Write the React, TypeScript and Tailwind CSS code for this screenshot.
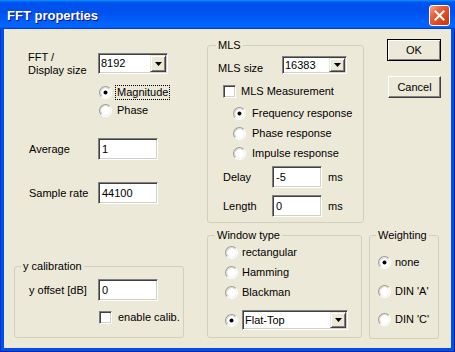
import React from "react";

const SUNKEN =
  "bg-white border border-t-[#808080] border-l-[#808080] border-b-white border-r-white shadow-[inset_1px_1px_0_#404040,inset_-1px_-1px_0_#d4d0c8]";

function Edit({ className, value }: { className: string; value: string }) {
  return (
    <div className={`${SUNKEN} ${className} flex items-center pl-[3px]`}>
      <span>{value}</span>
    </div>
  );
}

function Combo({ className, value }: { className: string; value: string }) {
  return (
    <div className={`${SUNKEN} ${className} flex items-stretch`}>
      <div className="flex-1 flex items-center pl-[2px]">{value}</div>
      <div className="my-[1px] mr-[1px] w-[16px] flex items-center justify-center bg-[#ECE9D8] border border-t-[#ECE9D8] border-l-[#ECE9D8] border-b-[#404040] border-r-[#404040] shadow-[inset_1px_1px_0_#ffffff,inset_-1px_-1px_0_#808080]">
        <svg width="7" height="4" viewBox="0 0 7 4">
          <path d="M0 0h7L3.5 4z" fill="#000" />
        </svg>
      </div>
    </div>
  );
}

function Radio({ checked = false }: { checked?: boolean }) {
  return (
    <svg width="13" height="13" viewBox="0 0 12 12" className="shrink-0">
      <circle cx="6" cy="6" r="4.6" fill="#fff" />
      <path d="M2.11 9.89A5.5 5.5 0 0 1 9.89 2.11" fill="none" stroke="#a0a0a0" strokeWidth="1" />
      <path d="M9.89 2.11A5.5 5.5 0 0 1 2.11 9.89" fill="none" stroke="#ffffff" strokeWidth="1" />
      <path d="M2.82 9.18A4.5 4.5 0 0 1 9.18 2.82" fill="none" stroke="#d4d4d0" strokeWidth="1" />
      <path d="M9.18 2.82A4.5 4.5 0 0 1 2.82 9.18" fill="none" stroke="#f4f4f0" strokeWidth="1" />
      {checked && <circle cx="6" cy="6" r="1.8" fill="#000" />}
    </svg>
  );
}

function Checkbox() {
  return <div className={`${SUNKEN} w-[13px] h-[13px] shrink-0`} />;
}

const GROUP = "border border-[#D0D0BF] rounded-[3px] p-0 m-0 min-w-0";

export default function App() {
  return (
    <div className="w-[455px] h-[352px] flex flex-col bg-[#0052E6] shadow-[inset_1px_0_0_#0831d9,inset_-1px_-1px_0_#001ea0] font-['Liberation_Sans',Arial,sans-serif] text-[11px] leading-[13px] text-black">
      {/* Title bar */}
      <div className="h-[29px] shrink-0 flex items-start justify-between bg-[linear-gradient(180deg,#0997ff,#0053ee_8%,#0050ee_40%,#06f_88%,#06f_93%,#005bff_95%,#003dd7_96%,#003dd7)]">
        <div className="pl-[7px] pt-[8px] text-[13px] leading-[15px] font-bold text-white [text-shadow:1px_1px_0_#0f1089]">
          FFT properties
        </div>
        <div className="mt-[5px] mr-[5px] w-[21px] h-[21px] rounded-[3px] border border-white flex items-center justify-center bg-[linear-gradient(135deg,#f6ad92_0%,#e8673f_30%,#d9441c_70%,#c8380f_100%)]">
          <svg width="11" height="11" viewBox="0 0 11 11">
            <path d="M1.5 1.5L9.5 9.5M9.5 1.5L1.5 9.5" stroke="#fff" strokeWidth="2" strokeLinecap="square" />
          </svg>
        </div>
      </div>

      {/* Body */}
      <div className="flex-1 mx-[4px] mb-[4px] bg-[#ECE9D8] flex items-start">
        {/* Column A */}
        <div className="ml-[10px] w-[170px] flex flex-col">
          <div className="mt-[24px] h-[21px] flex items-start">
            <div className="w-[84px] pl-[14px] -mt-[2px] leading-[13px]">
              FFT /<br />
              Display size
            </div>
            <Combo className="w-[70px] h-[21px]" value="8192" />
          </div>
          <div className="mt-[9px] ml-[85px] flex flex-col">
            <div className="h-[18px] flex items-center">
              <Radio checked />
              <span className="ml-[3px] px-[1px] border border-dotted border-black leading-[13px]">Magnitude</span>
            </div>
            <div className="h-[18px] flex items-center">
              <Radio />
              <span className="ml-[5px]">Phase</span>
            </div>
          </div>
          <div className="mt-[19px] flex items-center">
            <div className="w-[84px] pl-[15px]">Average</div>
            <Edit className="w-[60px] h-[22px]" value="1" />
          </div>
          <div className="mt-[22px] flex items-center">
            <div className="w-[84px] pl-[15px]">Sample rate</div>
            <Edit className="w-[60px] h-[22px]" value="44100" />
          </div>
          <fieldset className={`${GROUP} mt-[55px] h-[79px]`}>
            <legend className="ml-[6px] px-[2px] leading-[14px]">y calibration</legend>
            <div className="mt-[6px] flex items-center">
              <div className="w-[83px] pl-[14px]">y offset [dB]</div>
              <Edit className="w-[60px] h-[22px]" value="0" />
            </div>
            <div className="mt-[10px] ml-[84px] flex items-center">
              <Checkbox />
              <span className="ml-[6px]">enable calib.</span>
            </div>
          </fieldset>
        </div>

        {/* Column B */}
        <div className="ml-[23px] w-[157px] flex flex-col">
          <fieldset className={`${GROUP} mt-[9px] h-[185px]`}>
            <legend className="ml-[8px] px-[2px] leading-[14px]">MLS</legend>
            <div className="mt-[4px] h-[18px] flex items-start">
              <div className="w-[74px] pl-[10px] pt-[6px]">MLS size</div>
              <Combo className="w-[65px] h-[18px]" value="16383" />
            </div>
            <div className="mt-[11px] ml-[15px] flex items-center">
              <Checkbox />
              <span className="ml-[5px]">MLS Measurement</span>
            </div>
            <div className="mt-[5px] ml-[25px] flex flex-col">
              <div className="h-[20px] flex items-center">
                <Radio checked />
                <span className="ml-[6px]">Frequency response</span>
              </div>
              <div className="h-[20px] flex items-center">
                <Radio />
                <span className="ml-[6px]">Phase response</span>
              </div>
              <div className="h-[20px] flex items-center">
                <Radio />
                <span className="ml-[6px]">Impulse response</span>
              </div>
            </div>
            <div className="mt-[3px] flex items-center">
              <div className="w-[64px] pl-[15px]">Delay</div>
              <Edit className="w-[50px] h-[22px]" value="-5" />
              <span className="ml-[6px]">ms</span>
            </div>
            <div className="mt-[7px] flex items-center">
              <div className="w-[64px] pl-[15px]">Length</div>
              <Edit className="w-[50px] h-[22px]" value="0" />
              <span className="ml-[6px]">ms</span>
            </div>
          </fieldset>
          <fieldset className={`${GROUP} mt-[5px] w-[155px] h-[110px]`}>
            <legend className="ml-[7px] px-[2px] leading-[14px]">Window type</legend>
            <div className="ml-[17px] flex flex-col">
              <div className="h-[20px] flex items-center">
                <Radio />
                <span className="ml-[4px]">rectangular</span>
              </div>
              <div className="h-[20px] flex items-center">
                <Radio />
                <span className="ml-[4px]">Hamming</span>
              </div>
              <div className="h-[20px] flex items-center">
                <Radio />
                <span className="ml-[4px]">Blackman</span>
              </div>
              <div className="mt-[8px] h-[20px] flex items-center">
                <Radio checked />
                <Combo className="ml-[4px] w-[106px] h-[20px]" value="Flat-Top" />
              </div>
            </div>
          </fieldset>
        </div>

        {/* Column C */}
        <div className="ml-[5px] w-[73px] flex flex-col">
          <div className="mt-[10px] ml-[18px] w-[54px] h-[22px] flex items-center justify-center border border-black shadow-[inset_1px_1px_0_#ffffff,inset_-1px_-1px_0_#808080]">
            OK
          </div>
          <div className="mt-[15px] ml-[19px] w-[53px] h-[22px] flex items-center justify-center border border-t-white border-l-white border-b-[#404040] border-r-[#404040] shadow-[inset_-1px_-1px_0_#808080]">
            Cancel
          </div>
          <fieldset className={`${GROUP} mt-[130px] w-[70px] h-[111px]`}>
            <legend className="ml-[6px] px-[2px] leading-[14px]">Weighting</legend>
            <div className="ml-[8px] flex flex-col">
              <div className="mt-[10px] h-[20px] flex items-center">
                <Radio checked />
                <span className="ml-[4px]">none</span>
              </div>
              <div className="mt-[9px] h-[20px] flex items-center">
                <Radio />
                <span className="ml-[4px]">{"DIN 'A'"}</span>
              </div>
              <div className="mt-[8px] h-[20px] flex items-center">
                <Radio />
                <span className="ml-[4px]">{"DIN 'C'"}</span>
              </div>
            </div>
          </fieldset>
        </div>
      </div>
    </div>
  );
}
